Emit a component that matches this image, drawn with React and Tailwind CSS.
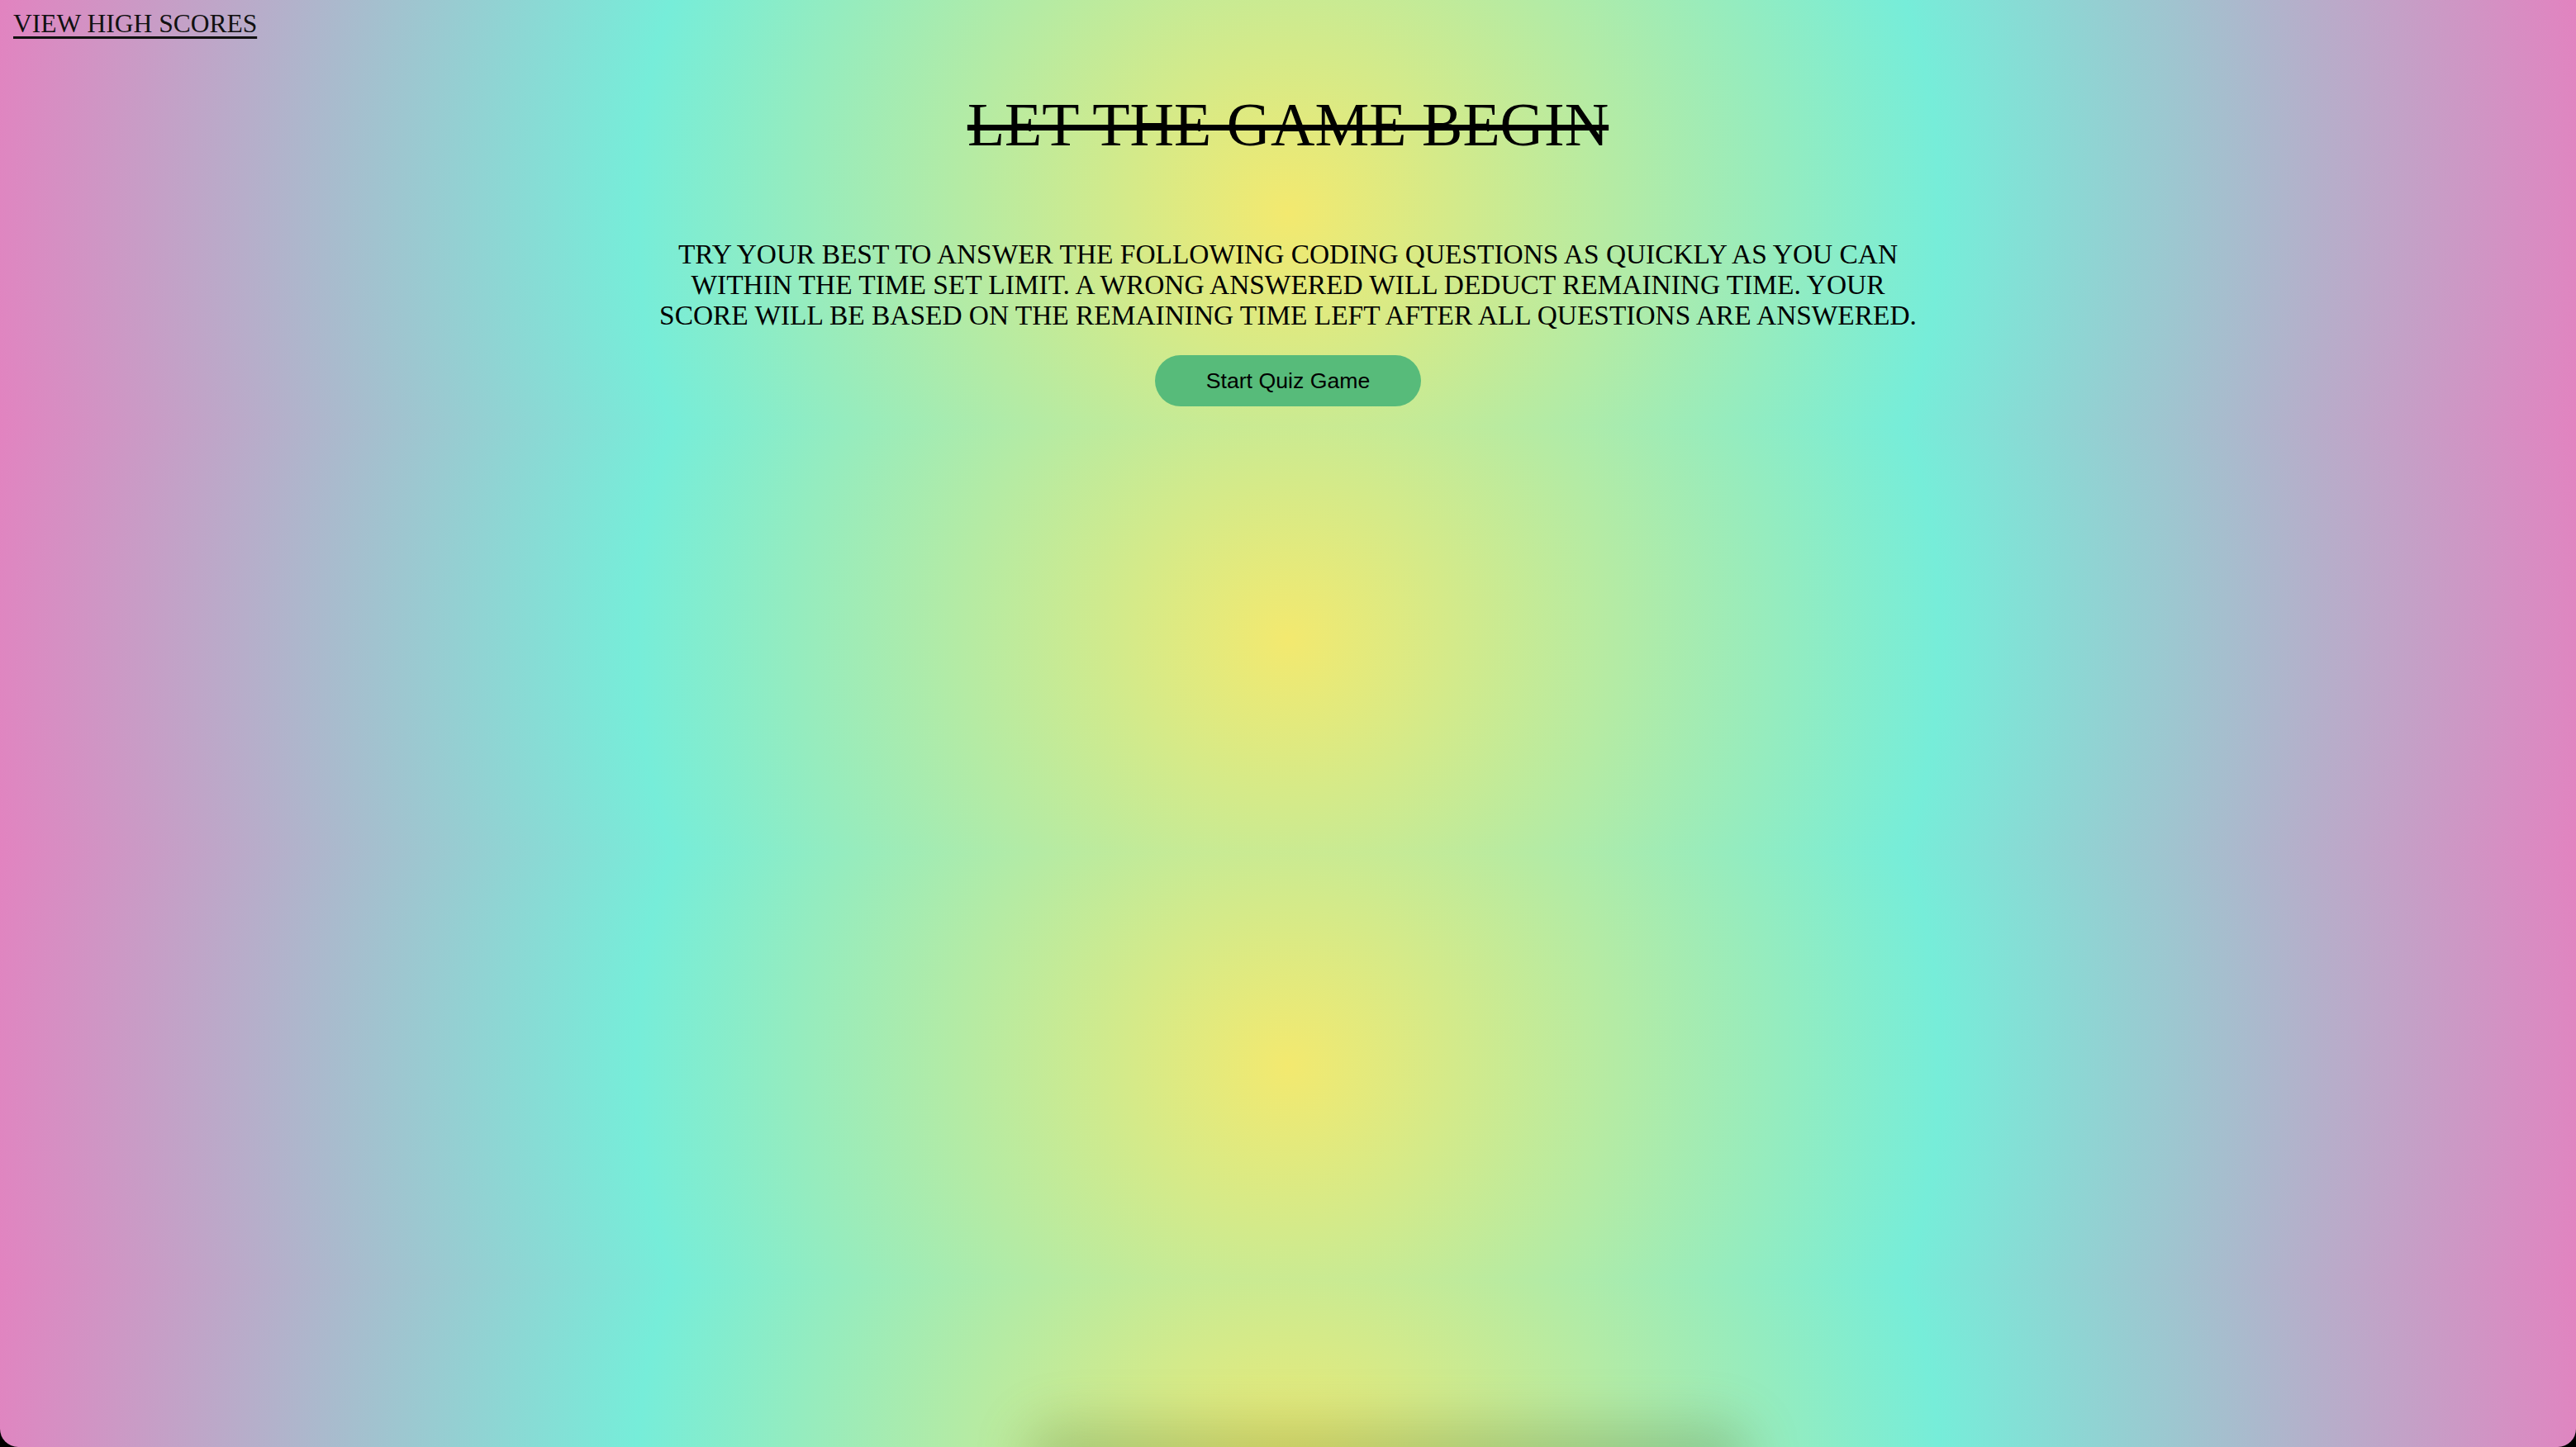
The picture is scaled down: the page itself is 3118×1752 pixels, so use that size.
export default function App() {
  return (
    <div className="h-screen w-full bg-black">
      <div className="relative h-full w-full overflow-hidden rounded-b-[22px] bg-[radial-gradient(circle,#f3e96f,#76edd9,#e283c0)] bg-size-[100%_516px] bg-repeat font-['Liberation_Serif',serif] text-black">
        {/* top link */}
        <div className="px-4 pt-[12px]">
          <a href="#" className="text-[31.5px] leading-[34px] uppercase underline decoration-[3px] underline-offset-[5px] text-[#111]">
            View high scores
          </a>
        </div>

        {/* intro */}
        <div className="flex flex-col items-center">
          <h1 className="mt-[65px] text-[74px] leading-[80px] uppercase line-through decoration-[7px]">
            Let the game begin
          </h1>
          <p className="mt-[98px] text-center text-[33.4px] leading-[37px] uppercase">
            Try your best to answer the following coding questions as quickly as you can
            <br />
            within the time set limit. A wrong answered will deduct remaining time. Your
            <br />
            score will be based on the remaining time left after all questions are answered.
          </p>
          <button className="mt-[30px] h-[62px] w-[322px] rounded-full bg-[#57bb7a] font-['Liberation_Sans',sans-serif] text-[26.67px] text-black">
            Start Quiz Game
          </button>
        </div>

        {/* faint shadow from off-screen element */}
        <div className="pointer-events-none absolute bottom-[-60px] left-[1240px] h-[90px] w-[880px] rounded-full bg-[#4a6b2a]/25 blur-[30px]" />
      </div>
    </div>
  );
}
